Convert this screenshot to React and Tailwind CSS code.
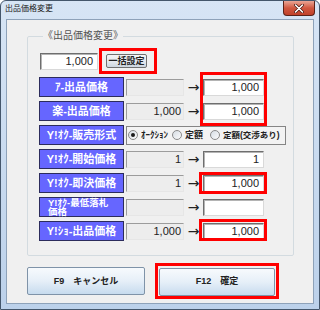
import React from "react";

const rows = [
  { label: "ｱ-出品価格", from: "", to: "1,000" },
  { label: "楽-出品価格", from: "1,000", to: "1,000" },
  { label: "Y!ｵｸ-販売形式", radio: true },
  { label: "Y!ｵｸ-開始価格", from: "1", to: "1" },
  { label: "Y!ｵｸ-即決価格", from: "1", to: "1,000" },
  { label: "Y!ｵｸ-最低落札", label2: "価格", from: "", to: "" },
  { label: "Y!ｼｮ-出品価格", from: "1,000", to: "1,000" },
];

const Radio = ({ checked }) => (
  <span className="w-[10px] h-[10px] rounded-full border border-[#8a8a8a] bg-gradient-to-br from-[#d6dde4] to-[#fbfbfb] flex items-center justify-center shrink-0">
    {checked && <span className="w-[4px] h-[4px] rounded-full bg-[#1b1b1b]" />}
  </span>
);

const InputBox = ({ value, className = "" }) => (
  <div
    className={`h-[17px] bg-white border border-t-[#6e6e6e] border-l-[#6e6e6e] border-r-[#d9d9d9] border-b-[#d9d9d9] shadow-[inset_1px_1px_0_#b4b4b4] text-right pr-[4px] text-[11px] leading-[15px] text-[#222] ${className}`}
  >
    {value}
  </div>
);

const Row = ({ row }) => (
  <div className="flex items-center h-[20px]">
    <div
      className={`w-[85px] h-[20px] bg-[#6666ff] border border-[#2c2c5c] text-white font-bold flex flex-col ${
        row.label2
          ? "items-start justify-center pl-[8px] text-[9.5px] leading-[9px]"
          : "items-center justify-center text-[11px] leading-none"
      }`}
    >
      <span className="whitespace-nowrap">{row.label}</span>
      {row.label2 && <span>{row.label2}</span>}
    </div>
    {row.radio ? (
      <div className="ml-[2px] w-[160px] h-[19px] border border-[#858585] bg-[#f3f3f3] flex items-center text-[9px] font-bold text-[#222] leading-none whitespace-nowrap">
        <div className="w-[45px] flex items-center pl-[1px] gap-[3px]">
          <Radio checked />
          <span>ｵｰｸｼｮﾝ</span>
        </div>
        <div className="w-[38px] flex items-center gap-[3px]">
          <Radio />
          <span>定額</span>
        </div>
        <div className="flex items-center gap-[3px]">
          <Radio />
          <span className="text-[8.5px]">定額(交渉あり)</span>
        </div>
      </div>
    ) : (
      <>
        <div className="ml-[2px] w-[58px] h-[17px] bg-[#ededed] border border-t-[#9c9c9c] border-l-[#9c9c9c] border-r-[#e6e6e6] border-b-[#e6e6e6] text-right pr-[2px] text-[11px] leading-[15px] text-[#222]">
          {row.from}
        </div>
        <div className="w-[19px] text-center text-[14px] leading-none text-[#222] font-['DejaVu_Sans',sans-serif]">→</div>
        <InputBox value={row.to} className="w-[61px]" />
      </>
    )}
  </div>
);

export default function App() {
  return (
    <div className="w-[320px] h-[310px] bg-gradient-to-b from-[#d7e5f5] to-[#bcd1ea] border border-[#44566b] rounded-t-[6px] flex flex-col font-['Liberation_Sans','Noto_Sans_CJK_JP',sans-serif] overflow-hidden">
      {/* title bar */}
      <div className="h-[18px] flex items-start justify-between pl-[4px] pr-[4px]">
        <span className="text-[8px] leading-none text-[#1a1a1a] mt-[4px]">出品価格変更</span>
        <div className="w-[32px] h-[15px] rounded-b-[4px] border border-t-0 border-[#5a2218] bg-gradient-to-b from-[#e9a595] via-[#d0573f] to-[#c0412a] flex items-center justify-center">
          <svg width="10" height="9" viewBox="0 0 10 9">
            <path d="M1.5 1 L8.5 8 M8.5 1 L1.5 8" stroke="#4a1810" strokeWidth="3" strokeLinecap="round" />
            <path d="M1.5 1 L8.5 8 M8.5 1 L1.5 8" stroke="#ffffff" strokeWidth="1.6" strokeLinecap="round" />
          </svg>
        </div>
      </div>

      {/* client area */}
      <div className="mx-[5px] h-[285px] border border-[#8ea2b9] bg-[#f0f0f0] flex flex-col">
        <fieldset className="ml-[20px] mt-[9px] w-[267px] h-[227px] border border-[#d3dbe0] rounded-[2px] pl-[11px] pt-[5px]">
          <legend className="ml-[4px] px-0 text-[10px] leading-[14px] text-[#555]">《出品価格変更》</legend>

          <div className="flex items-center">
            <InputBox value="1,000" className="ml-[1px] w-[58px]" />
            <div className="ml-[1px] w-[58px] h-[26px] border-[3px] border-[#ff0000] pl-[4px] flex items-center">
              <button className="w-[41px] h-[14px] border border-[#707070] rounded-[2px] bg-gradient-to-b from-[#f4f4f4] via-[#e6eaef] to-[#cdd6df] text-[9px] font-bold leading-none text-[#222] flex items-center justify-center">
                一括設定
              </button>
            </div>
          </div>

          <div className="relative mt-[3px] flex flex-col gap-[4px]">
            {rows.map((row, i) => (
              <Row key={i} row={row} />
            ))}
            {/* red annotation boxes */}
            <div className="absolute left-[161px] top-[-5px] w-[67px] h-[54px] border-[3px] border-[#ff0000] pointer-events-none" />
            <div className="absolute left-[160px] top-[95px] w-[68px] h-[22px] border-[3px] border-[#ff0000] pointer-events-none" />
            <div className="absolute left-[160px] top-[142px] w-[68px] h-[22px] border-[3px] border-[#ff0000] pointer-events-none" />
          </div>
        </fieldset>

        <div className="ml-[20px] mt-[7px] flex items-center gap-[10px]">
          <button className="w-[118px] h-[28px] border border-[#7f93a8] rounded-[2px] bg-gradient-to-b from-[#f7fafd] via-[#e6eff8] to-[#c7dbee] text-[9px] font-bold text-[#222] leading-none">
            F9　キャンセル
          </button>
          <div className="w-[124px] h-[36px] border-[3px] border-[#ff0000] p-[1px]">
            <button className="w-full h-full border border-[#7f93a8] rounded-[2px] bg-gradient-to-b from-[#f7fafd] via-[#e6eff8] to-[#c7dbee] text-[9px] font-bold text-[#222] leading-none">
              F12　確定
            </button>
          </div>
        </div>
      </div>
    </div>
  );
}
